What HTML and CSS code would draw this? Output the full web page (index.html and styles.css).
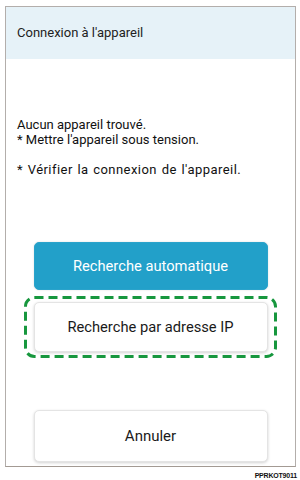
FILE: index.html
```html
<!DOCTYPE html>
<html lang="fr">
<head>
<meta charset="utf-8">
<link rel="stylesheet" href="styles.css">
</head>
<body>
<div class="frame">
  <div class="header">Connexion à l'appareil</div>
  <div class="content">
    <div class="message">
      <p>Aucun appareil trouvé.</p>
      <p>* Mettre l'appareil sous tension.</p>
      <p class="gap">* Vérifier la connexion de l'appareil.</p>
    </div>
    <button class="btn btn-primary">Recherche automatique</button>
    <div class="highlight">
      <svg class="dash" viewBox="0 0 253 62" preserveAspectRatio="none"><rect x="1.5" y="1.5" width="250" height="59" rx="9" ry="9" fill="none" stroke="#17973e" stroke-width="3" stroke-dasharray="9 5"/></svg>
      <button class="btn btn-white">Recherche par adresse IP</button>
    </div>
    <button class="btn btn-white btn-cancel">Annuler</button>
  </div>
</div>
<div class="code">PPRKOT9011</div>
</body>
</html>
```
FILE: styles.css
```css
html, body {
  margin: 0;
  padding: 0;
  background: #fff;
}
body {
  font-family: Roboto, "Noto Sans", sans-serif;
  color: #1a1a1a;
  width: 300px;
  height: 480px;
  overflow: hidden;
}
.frame {
  box-sizing: border-box;
  margin: 6px 0 0 5px;
  width: 291px;
  height: 461px;
  border: 1px solid #b3aeab;
  border-bottom-color: #a39a93;
  display: flex;
  flex-direction: column;
}
.header {
  height: 52px;
  background: #e6f2f8;
  font-size: 13px;
  line-height: 52px;
  padding-left: 11px;
  color: #222;
}
.content {
  display: flex;
  flex-direction: column;
  align-items: center;
  padding-top: 58px;
}
.message {
  align-self: stretch;
  padding-left: 11px;
  font-size: 13px;
  line-height: 15px;
  color: #111;
}
.message p {
  margin: 0;
}
.message .gap {
  margin-top: 15px;
  letter-spacing: 0.45px;
  word-spacing: 1px;
}
.btn {
  box-sizing: border-box;
  width: 234px;
  height: 48px;
  border-radius: 5px;
  font-family: Roboto, "Noto Sans", sans-serif;
  font-size: 14.7px;
  padding: 0;
  cursor: pointer;
}
.btn-primary {
  margin-top: 65px;
  background: #22a0c9;
  color: #fff;
  border: 1px solid #2aa3cb;
  box-shadow: 0 0 2px rgba(0,0,0,0.15);
}
.btn-white {
  background: #fff;
  color: #1a1a1a;
  border: 1px solid #e4e4e4;
  box-shadow: 0 1px 3px rgba(0,0,0,0.18);
  height: 50px;
}
.highlight {
  position: relative;
  margin-top: 6px;
  width: 253px;
  height: 62px;
  display: flex;
  align-items: center;
  justify-content: center;
}
.dash {
  position: absolute;
  left: 0;
  top: 0;
  width: 253px;
  height: 62px;
}
.btn-cancel {
  margin-top: 52px;
  height: 52px;
  font-size: 15px;
}
.code {
  text-align: right;
  padding-right: 3px;
  margin-top: 5px;
  font-family: "Liberation Sans", Arial, sans-serif;
  font-weight: bold;
  font-size: 7px;
  letter-spacing: -0.2px;
  color: #111;
}
```
